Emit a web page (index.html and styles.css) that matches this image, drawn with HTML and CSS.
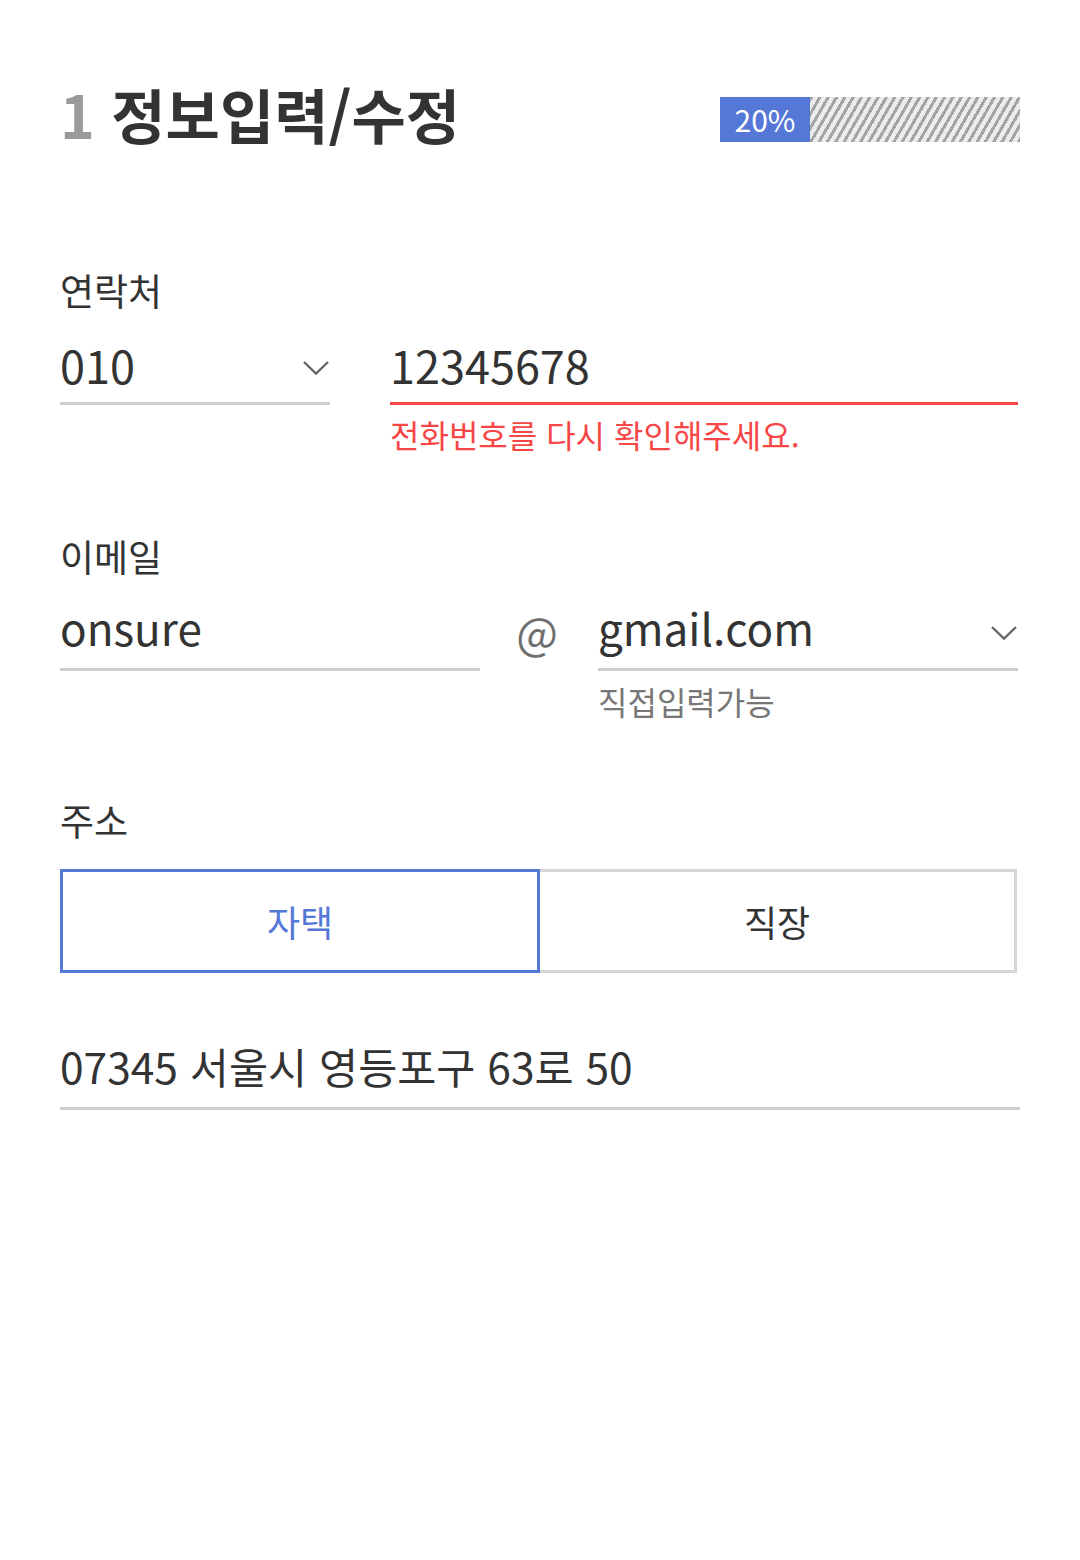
FILE: index.html
```html
<!DOCTYPE html>
<html lang="ko">
<head>
<meta charset="utf-8">
<title>정보입력/수정</title>
<link rel="stylesheet" href="styles.css">
</head>
<body>
<div class="page">
  <header class="head">
    <h1 class="title"><span class="step">1</span> 정보입력/수정</h1>
    <div class="progress">
      <div class="progress-fill" style="width:90px">20%</div>
      <div class="progress-rest"></div>
    </div>
  </header>

  <section class="group group-phone">
    <div class="label">연락처</div>
    <div class="phone-row">
      <div class="field field-phone select">
        <span class="value">010</span>
        <svg class="chev" width="28" height="16" viewBox="0 0 28 16"><polyline points="2,2 14,13.5 26,2" fill="none" stroke="#666" stroke-width="2.4"/></svg>
      </div>
      <div class="col">
        <div class="field field-phone is-error"><span class="value">12345678</span></div>
        <div class="msg msg-error">전화번호를 다시 확인해주세요.</div>
      </div>
    </div>
  </section>

  <section class="group group-email">
    <div class="label">이메일</div>
    <div class="email-row">
      <div class="field field-email"><span class="value">onsure</span></div>
      <div class="at">@</div>
      <div class="col">
        <div class="field field-email select">
          <span class="value">gmail.com</span>
          <svg class="chev" width="28" height="16" viewBox="0 0 28 16"><polyline points="2,2 14,13.5 26,2" fill="none" stroke="#666" stroke-width="2.4"/></svg>
        </div>
        <div class="msg msg-help">직접입력가능</div>
      </div>
    </div>
  </section>

  <section class="group group-addr">
    <div class="label">주소</div>
    <div class="toggle">
      <div class="toggle-btn is-active">자택</div>
      <div class="toggle-btn">직장</div>
    </div>
    <div class="field field-addr"><span class="value">07345 서울시 영등포구 63로 50</span></div>
  </section>
</div>
</body>
</html>
```

FILE: styles.css
```css
* { box-sizing: border-box; }
html, body { margin: 0; padding: 0; background: #fff; }
body {
  font-family: "Noto Sans CJK KR", "Noto Sans", sans-serif;
  color: #333;
}
.page {
  width: 1080px;
  padding: 71px 60px 0 60px;
}

/* header */
.head {
  display: flex;
  justify-content: space-between;
  align-items: flex-start;
  height: 86px;
}
.title {
  margin: 0;
  font-size: 59px;
  line-height: 86px;
  font-weight: 700;
  color: #333;
  letter-spacing: 0;
}
.step { color: #9a9a9a; }
.progress {
  margin-top: 26px;
  width: 300px;
  height: 45px;
  display: flex;
}
.progress-fill {
  background: #5577d6;
  color: #fff;
  font-size: 30px;
  line-height: 45px;
  text-align: center;
  font-weight: 400;
}
.progress-rest {
  flex: 1;
  background-color: #ececec;
  background-image: repeating-linear-gradient(120deg, #a4a4a4 0 3px, #ececec 3px 7.2px);
}

/* groups */
.group-phone { margin-top: 108px; }
.group-email { margin-top: 75px; }
.group-addr { margin-top: 72px; }

.label {
  font-size: 37px;
  line-height: 50px;
  font-weight: 400;
  color: #333;
}

.field {
  display: flex;
  align-items: center;
  justify-content: space-between;
  border-bottom: 3px solid #cccccc;
  font-size: 44px;
  line-height: 56px;
  color: #333;
}
.field-phone { padding-bottom: 9px; font-size: 45px; }
.field-email { padding-bottom: 13px; }
.field-addr { padding-bottom: 13px; font-size: 42.5px; margin-top: 65px; }
.field.is-error { border-bottom-color: #f64646; }
.select .chev { flex: none; margin-top: 6px; }
.field-email.select .chev { margin-top: 12px; }

.phone-row {
  margin-top: 22px;
  display: grid;
  grid-template-columns: 270px 628px;
  column-gap: 60px;
  align-items: start;
}
.email-row {
  margin-top: 18px;
  display: grid;
  grid-template-columns: 420px 118px 420px;
  align-items: start;
}
.at {
  font-size: 44px;
  line-height: 56px;
  color: #6f6f6f;
  text-align: center;
  padding-top: 4px;
  padding-right: 4px;
}

.msg {
  font-size: 32px;
  line-height: 44px;
}
.msg-error { color: #f64646; margin-top: 7px; }
.msg-help { color: #777; margin-top: 8px; }

/* toggle */
.toggle {
  margin-top: 24px;
  display: grid;
  grid-template-columns: 480px 477px;
  height: 104px;
}
.toggle-btn {
  display: flex;
  align-items: center;
  justify-content: center;
  font-size: 36px;
  color: #333;
  border: 3px solid #d6d6d6;
  border-left: 0;
}
.toggle-btn.is-active {
  border: 3px solid #5577d6;
  color: #5577d6;
}
```
